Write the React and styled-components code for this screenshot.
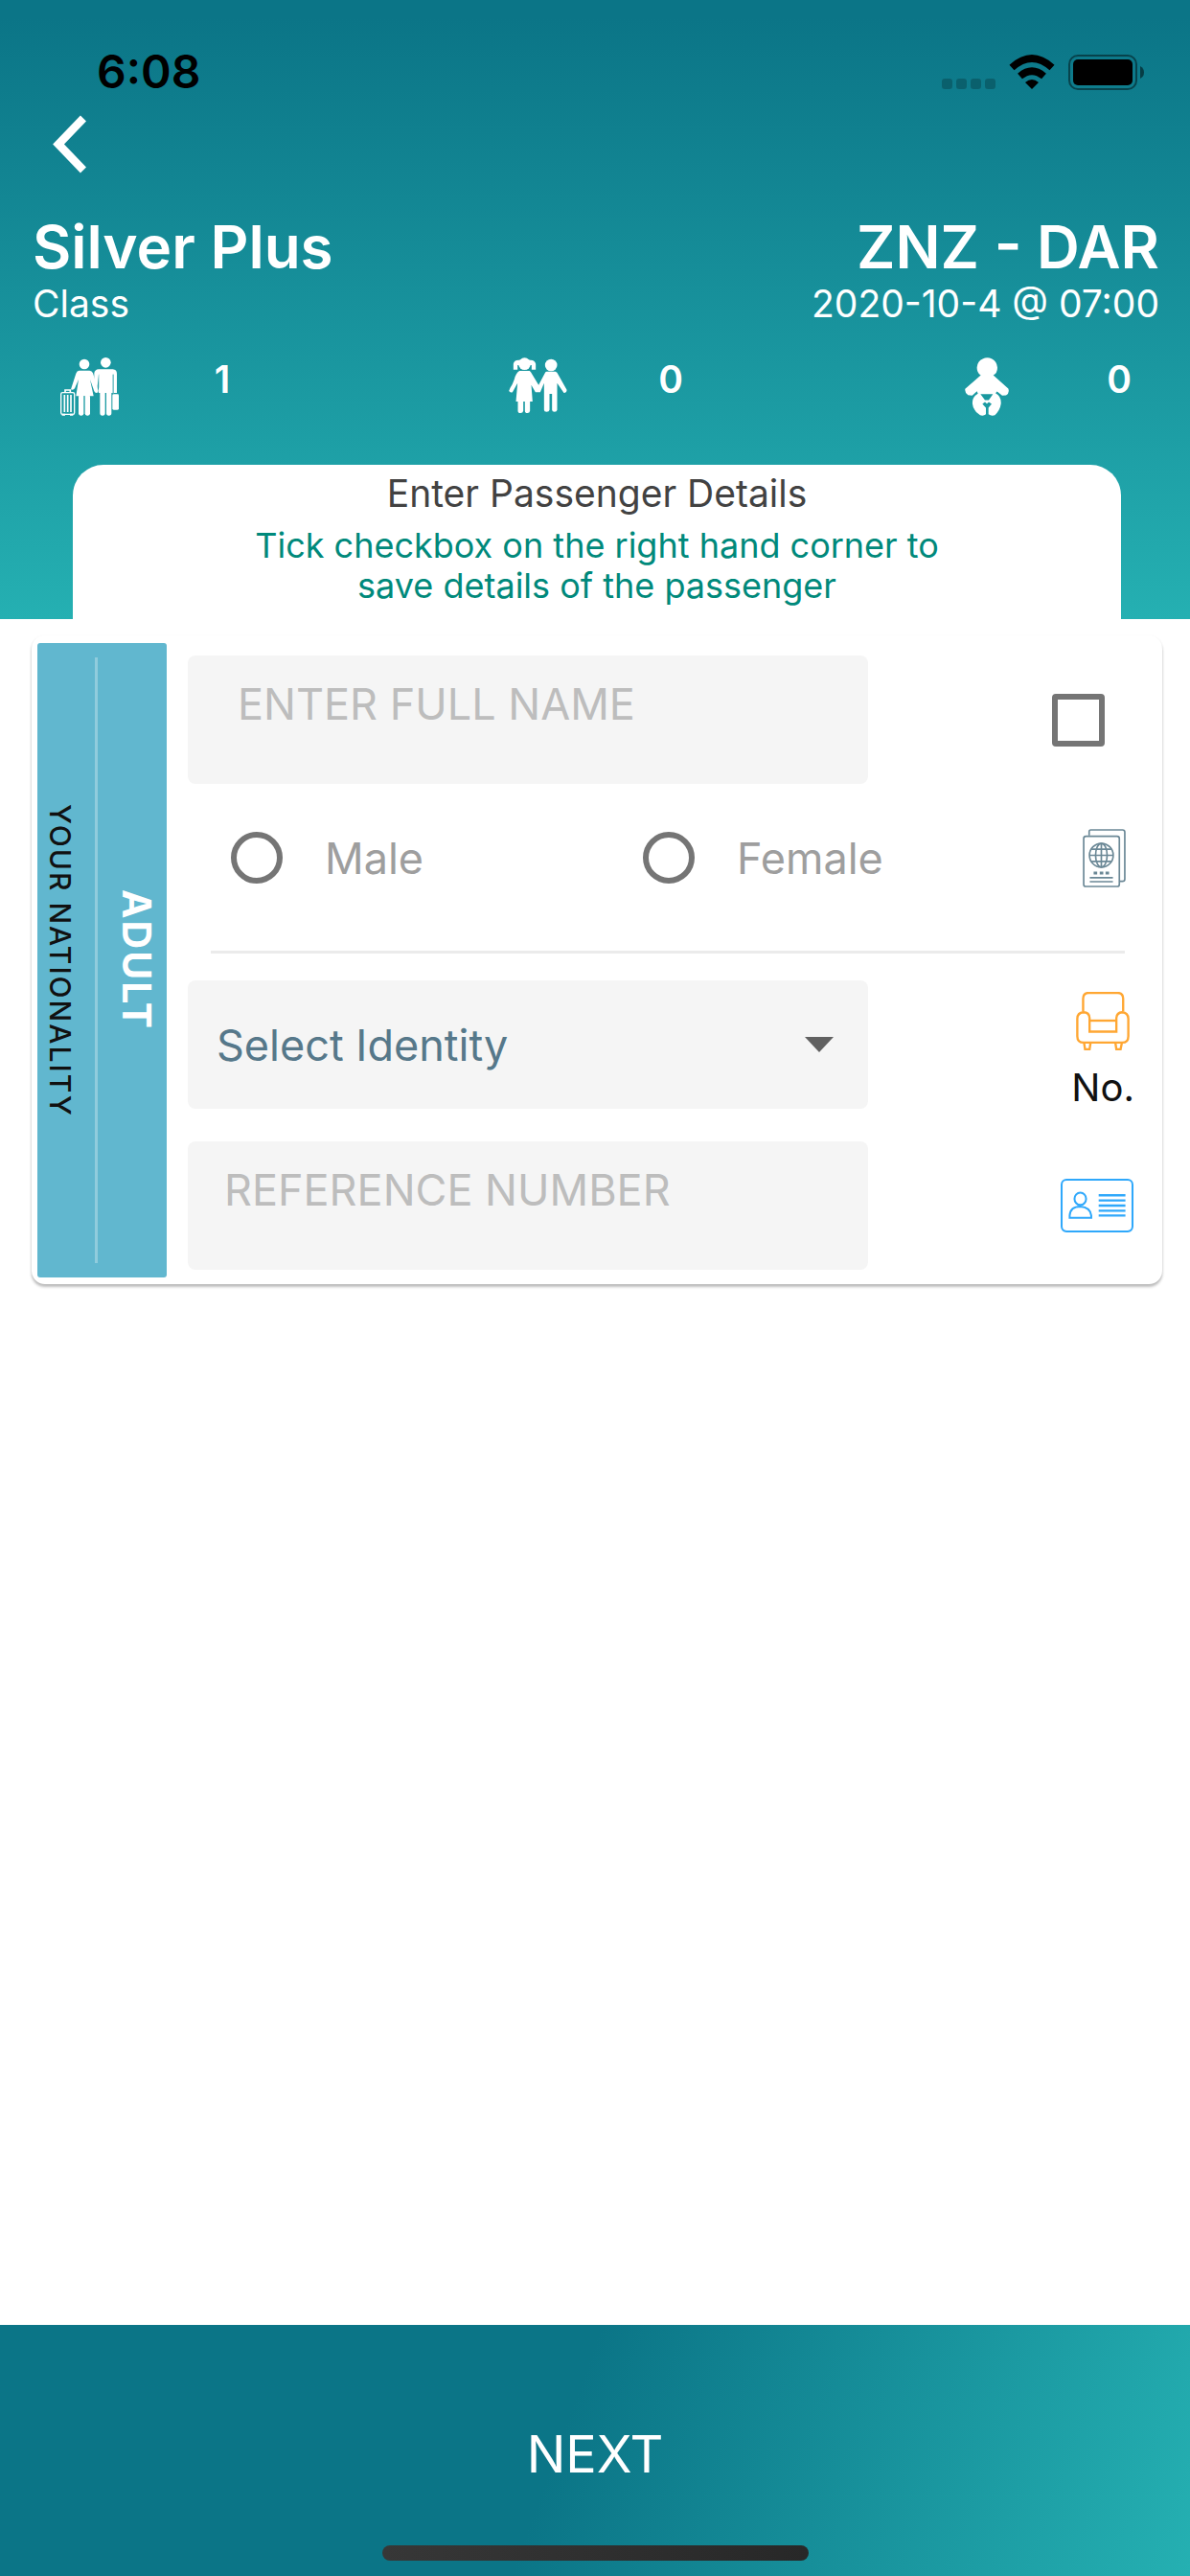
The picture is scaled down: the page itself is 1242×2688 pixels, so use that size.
import React, { useState } from "react";
import styled, { createGlobalStyle } from "styled-components";

const GlobalStyle = createGlobalStyle`
  * {
    box-sizing: border-box;
  }

  body {
    margin: 0;
    background: #fff;
    font-family: Inter, "Liberation Sans", sans-serif;
  }

  button, input, select {
    margin: 0;
    padding: 0;
    border: 0;
    font-family: inherit;
  }
`;

const Page = styled.div`
  min-height: 100vh;
  display: flex;
  flex-direction: column;
`;

const Header = styled.header`
  display: flex;
  flex-direction: column;
  padding-top: 50px;
  color: #fff;
  background: linear-gradient(180deg, #0b7587 3%, #25b0b2 100%);
`;

const StatusBar = styled.div`
  display: flex;
  align-items: center;
  justify-content: space-between;
  height: 50px;
  padding: 0 47px 0 101px;
  color: #000;
`;

const Clock = styled.span`
  font-size: 48px;
  line-height: 50px;
  font-weight: 600;
`;

const StatusIcons = styled.div`
  display: flex;
  align-items: flex-end;
  gap: 14px;
`;

const BackButton = styled.button`
  align-self: flex-start;
  display: flex;
  margin: 20px 0 39px 54px;
  background: none;
  color: #fff;
`;

const Trip = styled.div`
  display: flex;
  justify-content: space-between;
  padding: 0 32px 0 34px;
`;

const TripSide = styled.div`
  text-align: ${(props) => (props.$end ? "right" : "left")};

  h1, h2 {
    margin: 0;
    font-size: 62px;
    line-height: 76px;
    font-weight: 600;
    font-optical-sizing: none;
  }

  p {
    margin: 0;
    font-size: 39px;
    line-height: 42px;
  }
`;

const Counts = styled.div`
  display: flex;
  justify-content: space-between;
  padding: 35px 62px 52px 63px;
`;

const Count = styled.div`
  display: grid;
  grid-template-columns: 61px 24px;
  column-gap: 96px;
  justify-items: center;
  height: 60px;
  font-size: 39px;
  line-height: 46px;
  font-weight: 600;
`;

const Notice = styled.section`
  margin: 0 72px 0 76px;
  padding: 6px 180px 14px;
  border-radius: 32px 32px 0 0;
  background: #fff;
  text-align: center;

  h3 {
    margin: 0 0 9px;
    font-size: 39px;
    line-height: 48px;
    font-weight: 400;
    color: #424242;
  }

  p {
    margin: 0;
    font-size: 36px;
    line-height: 42px;
    color: #00897b;
  }
`;

const Card = styled.form`
  display: flex;
  margin: 17px 29px 0 33px;
  padding: 8px 0 7px 6px;
  border-radius: 14px;
  background: #fff;
  box-shadow: 0 3px 3px rgba(0, 0, 0, 0.24), 0 1px 3px rgba(0, 0, 0, 0.08);
`;

const Side = styled.div`
  display: flex;
  width: 135px;
  padding: 15px 0;
  border-radius: 3px;
  background: #61b7cf;
`;

const Nationality = styled.button`
  width: 63px;
  padding-right: 12px;
  border-right: 3px solid rgba(255, 255, 255, 0.3);
  background: none;
  writing-mode: vertical-rl;
  font-size: 30px;
  line-height: 48px;
  font-weight: 500;
  letter-spacing: 2px;
  color: #111;
`;

const AgeGroup = styled.span`
  flex: 1;
  writing-mode: vertical-rl;
  text-align: center;
  font-size: 41px;
  line-height: 62px;
  font-weight: 700;
  letter-spacing: 2px;
  color: #fff;
`;

const Fields = styled.div`
  flex: 1;
  min-width: 0;
  padding: 13px 0 8px 22px;
`;

const Row = styled.div`
  display: flex;
  align-items: center;
  height: ${(props) => props.$height || 134}px;
  margin-bottom: ${(props) => props.$gap || 0}px;
`;

const Aside = styled.div`
  display: flex;
  justify-content: flex-end;
  width: ${(props) => (props.$narrow ? 112 : 307)}px;
  padding-right: ${(props) => props.$right}px;
`;

const TextInput = styled.input`
  flex: 1;
  min-width: 0;
  height: 100%;
  padding: 0 16px 34px ${(props) => props.$indent}px;
  border-radius: 8px;
  background: #f5f5f5;
  font-size: 45px;
  color: #212121;

  &::placeholder {
    color: #bdbdbd;
    opacity: 1;
  }
`;

const SelectBox = styled.div`
  flex: 1;
  display: grid;
  align-items: center;
  height: 100%;
  border-radius: 8px;
  background: #f5f5f5;

  select, svg {
    grid-area: 1 / 1;
  }

  select {
    width: 100%;
    height: 100%;
    padding: 0 80px 0 30px;
    appearance: none;
    background: none;
    font-size: 45px;
    color: #56788a;
  }

  svg {
    justify-self: end;
    margin-right: 36px;
    pointer-events: none;
  }
`;

const Checkbox = styled.input`
  appearance: none;
  width: 55px;
  height: 55px;
  border: 6px solid #757575;
  border-radius: 4px;

  &:checked {
    background: #00897b;
  }
`;

const Radios = styled.div`
  flex: 1;
  display: flex;
  padding-left: 45px;
`;

const RadioLabel = styled.label`
  flex: 1;
  display: flex;
  align-items: center;
  gap: 44px;
  font-size: 45px;
  color: #9e9e9e;
`;

const Radio = styled.input`
  appearance: none;
  width: 54px;
  height: 54px;
  border: 6px solid #757575;
  border-radius: 50%;

  &:checked {
    background: radial-gradient(#00897b 12px, transparent 13px);
  }
`;

const Divider = styled.hr`
  height: 3px;
  margin: 0 39px 28px 24px;
  border: 0;
  background: #ebebeb;
`;

const Seat = styled.div`
  display: flex;
  flex-direction: column;
  align-items: center;
  gap: 14px;
  padding-top: 14px;
  font-size: 40px;
  line-height: 50px;
  color: #111;
`;

const Footer = styled.footer`
  display: flex;
  flex-direction: column;
  align-items: center;
  margin-top: auto;
  padding-bottom: 16px;
  background: linear-gradient(110deg, #0b7587 47%, #25b0b2 100%);
`;

const NextButton = styled.button`
  align-self: stretch;
  height: 230px;
  padding-top: 40px;
  background: none;
  font-size: 54px;
  line-height: 64px;
  color: #fff;
`;

const HomeIndicator = styled.div`
  width: 445px;
  height: 16px;
  border-radius: 8px;
  background: linear-gradient(90deg, #373737, #282828);
`;

const SignalDots = () => (
  <svg width="56" height="12" viewBox="0 0 56 12" fill="rgba(0,0,0,0.22)">
    {[0, 15, 30, 45].map((x) => (
      <rect key={x} x={x} y="0" width="11" height="11" rx="3" />
    ))}
  </svg>
);

const WifiIcon = () => (
  <svg width="48" height="37" viewBox="0 0 48 37">
    <path d="M24 36 L17 29 Q24 23 31 29 Z" />
    <path d="M11.5 22.5 Q24 12 36.5 22.5" fill="none" stroke="#000" strokeWidth="7.5" />
    <path d="M3 13.5 Q24 -5.5 45 13.5" fill="none" stroke="#000" strokeWidth="7.5" />
  </svg>
);

const BatteryIcon = () => (
  <svg width="80" height="37" viewBox="0 0 80 37">
    <rect x="1" y="1" width="70" height="35" rx="9" fill="none" stroke="rgba(0,0,0,0.45)" strokeWidth="2" />
    <rect x="5" y="5" width="62" height="27" rx="5" />
    <path d="M75 12 Q79 14 79 18.5 Q79 23 75 25 Z" fill="rgba(0,0,0,0.5)" />
  </svg>
);

const BackIcon = () => (
  <svg width="36" height="61" viewBox="0 0 36 61">
    <path d="M33 3.5 L7 30.5 L33 57.5" fill="none" stroke="#fff" strokeWidth="8.5" />
  </svg>
);

const AdultsIcon = () => (
  <svg width="61" height="61" viewBox="39 39 183 183" fill="#fff">
    <circle cx="114" cy="60" r="16" />
    <path d="M98 80 H130 Q138 80 141 88 L158 143 Q158 150 152 150 Q147 150 145 145 L132 108 L143 160 H88 L96 108 L84 136 Q79 143 72 139 L88 89 Q91 80 98 80 Z" />
    <rect x="96" y="155" width="16" height="66" rx="7" />
    <rect x="116" y="155" width="16" height="66" rx="7" />
    <circle cx="181" cy="55" r="16" />
    <path d="M159 76 H203 Q216 77 216 90 V150 H206 V92 H203 V150 H159 V92 L153 148 L145 128 V88 Q147 77 159 76 Z" />
    <path d="M163 140 H199 V214 Q199 221 191 221 Q183 221 183 214 V145 H179 V214 Q179 221 171 221 Q163 221 163 214 Z" />
    <path d="M160 92 V134 M204.5 92 V152" stroke="#9fd4d8" strokeWidth="2" />
    <rect x="202" y="154" width="20" height="49" rx="4" />
    <rect x="41" y="149" width="42" height="68" rx="5" fill="none" stroke="#fff" strokeWidth="4" />
    <path d="M54 149 V141 H70 V149 M52 156 V210 M62 156 V210 M72 156 V210" fill="none" stroke="#fff" strokeWidth="5" />
    <path d="M44 215 h10 v6 h-10 z M69 215 h10 v6 h-10 z" />
  </svg>
);

const ChildrenIcon = () => (
  <svg width="61" height="58" viewBox="54 42 182 174" fill="#fff">
    <circle cx="103" cy="62" r="19" />
    <path d="M68 80 V62 Q70 50 84 50 H122 Q135 50 138 62 V80 H125 V66 H81 V80 Z" />
    <path d="M87 84 H119 Q123 88 127 95 L147 128 L166 92 Q168 86 172 86 H200 Q205 88 208 95 L235 143 Q236 151 226 153 L205 122 V206 Q204 212 197 212 Q189 212 189 206 V156 H181 V206 Q180 212 172 212 Q164 212 164 206 V122 L152 151 H137 L124 128 L128 180 H120 V209 Q119 216 112 216 Q104 216 104 209 V180 H99 V209 Q98 216 90 216 Q82 216 82 209 V180 H76 L81 122 L66 149 Q62 155 54 147 L58 137 Q66 125 71 110 Q76 90 87 84 Z" />
    <circle cx="186" cy="66" r="19" />
  </svg>
);

const BabyIcon = () => (
  <svg width="46" height="61" viewBox="45 39 138 182" fill="#fff">
    <path d="M101 43 Q115 35 130 43 Q145 50 147 70 Q147 88 134 94 L181 136 Q186 150 174 157 L162 158 L146 145 L141 150 Q160 160 158 184 Q155 204 139 219 Q128 223 119 216 V196 L129 184 L120 178 L114 183 L108 178 L100 184 L111 196 V216 Q103 223 93 219 Q70 204 69 184 Q67 162 86 152 L83 144 L68 158 L55 156 Q44 148 46 137 L95 94 Q82 86 83 69 Q85 49 101 43 Z" />
    <path d="M94 153 H133 L120 172 H108 Z" fill="#1a989f" />
  </svg>
);

const PassportIcon = () => (
  <svg width="45" height="61" viewBox="121 48 134 182" fill="none" stroke="#6b8896" strokeWidth="5">
    <path d="M141 68 V56 Q141 51 146 51 H245 Q252 51 252 58 V204 Q252 211 245 211 H236" />
    <rect x="124" y="71" width="111" height="156" rx="7" />
    <circle cx="179" cy="130" r="37" />
    <ellipse cx="179" cy="130" rx="18" ry="37" />
    <path d="M179 93 V167 M142 130 H216 M148 111 H210 M148 149 H210" />
    <path d="M155 185 h11 M174 185 h11 M192 185 h11" strokeWidth="9" />
    <path d="M143 200 H215 M143 212 H215" />
  </svg>
);

const SeatIcon = () => (
  <svg width="56" height="61" viewBox="105 45 166 181" fill="none" stroke="#ffa733" strokeWidth="7">
    <path d="M127 106 V66 Q127 48 145 48 H233 Q251 48 251 66 V106" />
    <path d="M147 168 V126 Q146 108 128 108 Q109 110 109 128 V182 Q109 202 129 202 H248 Q267 202 267 182 V128 Q266 109 248 108 Q231 109 230 126 V168 Z" />
    <path d="M147 134 H230" />
    <path d="M130 203 L133 223 H147 L150 203 M227 203 L230 223 H243 L247 203" />
  </svg>
);

const IdCardIcon = () => (
  <svg width="76" height="56" viewBox="52 634 226 166" fill="none" stroke="#2fa8fb" strokeWidth="6">
    <rect x="55" y="637" width="220" height="160" rx="15" />
    <ellipse cx="113" cy="696" rx="18" ry="19" />
    <path d="M80 755 V748 Q82 720 113 720 Q144 722 147 748 V755 Z" />
    <path d="M170 685 H253 M170 701 H253 M170 717 H253 M170 733 H253 M170 748 H253" strokeWidth="7" />
  </svg>
);

const ArrowIcon = () => (
  <svg width="30" height="16" viewBox="0 0 30 16">
    <path d="M0 0 H30 L15 16 Z" fill="#616161" />
  </svg>
);

const counts = [
  { name: "Adults", icon: <AdultsIcon />, value: 1 },
  { name: "Children", icon: <ChildrenIcon />, value: 0 },
  { name: "Infants", icon: <BabyIcon />, value: 0 },
];

function App() {
  const [identity, setIdentity] = useState("");

  return (
    <Page>
      <GlobalStyle />
      <Header>
        <StatusBar>
          <Clock>6:08</Clock>
          <StatusIcons>
            <SignalDots />
            <WifiIcon />
            <BatteryIcon />
          </StatusIcons>
        </StatusBar>
        <BackButton type="button" aria-label="Back">
          <BackIcon />
        </BackButton>
        <Trip>
          <TripSide>
            <h1>Silver Plus</h1>
            <p>Class</p>
          </TripSide>
          <TripSide $end>
            <h2>ZNZ - DAR</h2>
            <p>2020-10-4 @ 07:00</p>
          </TripSide>
        </Trip>
        <Counts>
          {counts.map((count) => (
            <Count key={count.name} aria-label={count.name}>
              {count.icon}
              <span>{count.value}</span>
            </Count>
          ))}
        </Counts>
        <Notice>
          <h3>Enter Passenger Details</h3>
          <p>Tick checkbox on the right hand corner to save details of the passenger</p>
        </Notice>
      </Header>

      <Card>
        <Side>
          <Nationality type="button">YOUR NATIONALITY</Nationality>
          <AgeGroup>ADULT</AgeGroup>
        </Side>
        <Fields>
          <Row>
            <TextInput $indent={52} placeholder="ENTER FULL NAME" aria-label="Full name" />
            <Aside $right={60}>
              <Checkbox type="checkbox" aria-label="Save passenger details" />
            </Aside>
          </Row>
          <Row $height={154} $gap={20}>
            <Radios role="radiogroup" aria-label="Gender">
              <RadioLabel>
                <Radio type="radio" name="gender" value="male" />
                Male
              </RadioLabel>
              <RadioLabel>
                <Radio type="radio" name="gender" value="female" />
                Female
              </RadioLabel>
            </Radios>
            <Aside $narrow $right={38}>
              <PassportIcon />
            </Aside>
          </Row>
          <Divider />
          <Row $gap={34}>
            <SelectBox>
              <select
                aria-label="Identity"
                value={identity}
                onChange={(e) => setIdentity(e.target.value)}
              >
                <option value="">Select Identity</option>
                <option value="passport">Passport</option>
                <option value="national">National ID</option>
              </select>
              <ArrowIcon />
            </SelectBox>
            <Aside $right={29}>
              <Seat>
                <SeatIcon />
                <span>No.</span>
              </Seat>
            </Aside>
          </Row>
          <Row>
            <TextInput $indent={38} placeholder="REFERENCE NUMBER" aria-label="Reference number" />
            <Aside $right={30}>
              <IdCardIcon />
            </Aside>
          </Row>
        </Fields>
      </Card>

      <Footer>
        <NextButton type="button">NEXT</NextButton>
        <HomeIndicator />
      </Footer>
    </Page>
  );
}

export default App;
